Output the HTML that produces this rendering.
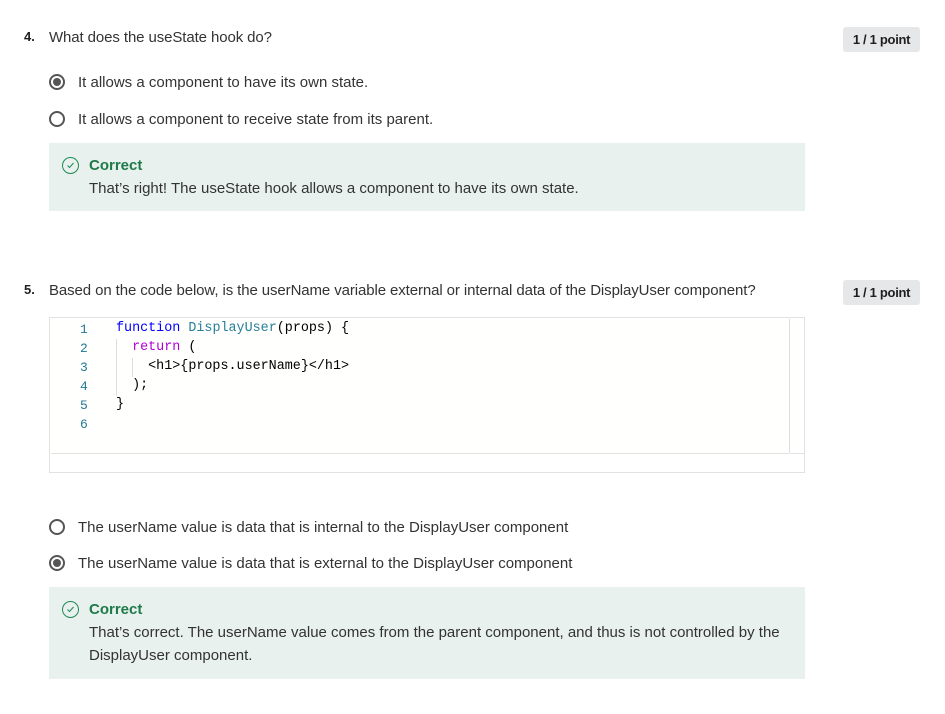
<!DOCTYPE html>
<html><head><style>
body{margin:0;width:945px;height:714px;background:#fff;font-family:"Liberation Sans",sans-serif;color:#1f1f1f;position:relative;overflow:hidden}
.a{position:absolute;white-space:nowrap}
.q{font-size:15px;color:#333}
.num{font-size:13px;font-weight:bold;color:#1f1f1f}
.pt{position:absolute;left:843px;width:77px;height:25px;background:#e5e7e8;border-radius:3px;font-size:13px;font-weight:bold;color:#1f1f1f;text-align:center;line-height:25px;letter-spacing:-0.3px}
.rad{position:absolute;left:49px;width:16px;height:16px;border:2px solid #555;border-radius:50%;box-sizing:border-box}
.rad.on::after{content:"";position:absolute;left:2px;top:2px;width:8px;height:8px;border-radius:50%;background:#555}
.fb{position:absolute;left:49px;width:756px;background:#e8f1ee}
.ck{position:absolute;left:13px;width:17px;height:17px;border:1px solid #1e8a53;border-radius:50%;box-sizing:border-box}
.cor{position:absolute;left:40px;font-size:15px;font-weight:bold;color:#1e7a48}
.ft{position:absolute;left:40px;font-size:15px;color:#333;line-height:23px}
.code{position:absolute;left:49px;top:317px;width:756px;height:156px;border:1px solid #e2e2e2;box-sizing:border-box;background:#fff}
.ln{position:absolute;left:30px;font-family:"Liberation Mono","DejaVu Sans Mono",monospace;font-size:13px;color:#237893}
.cl{position:absolute;left:66px;font-family:"Liberation Mono","DejaVu Sans Mono",monospace;font-size:13.4px;color:#000;white-space:pre}
</style></head><body>
<div class="a num" style="left:24px;top:29px">4.</div>
<div class="a q" style="left:49px;top:29px;letter-spacing:-0.1px">What does the useState hook do?</div>
<div class="pt" style="top:27px">1 / 1 point</div>
<div class="rad on" style="top:74px"></div>
<div class="a q" style="left:78px;top:74px">It allows a component to have its own state.</div>
<div class="rad" style="top:111px"></div>
<div class="a q" style="left:78px;top:111px">It allows a component to receive state from its parent.</div>
<div class="fb" style="top:143px;height:68px">
<div class="ck" style="top:14px"><svg width="15" height="15" viewBox="0 0 15 15"><path d="M4.5 7.5l2 2 4-4.5" fill="none" stroke="#1e8a53" stroke-width="1"/></svg></div>
<div class="a cor" style="top:14px">Correct</div>
<div class="a ft" style="top:34px">That’s right! The useState hook allows a component to have its own state.</div>
</div>

<div class="a num" style="left:24px;top:282px">5.</div>
<div class="a q" style="left:49px;top:282px;letter-spacing:-0.1px">Based on the code below, is the userName variable external or internal data of the DisplayUser component?</div>
<div class="pt" style="top:280px">1 / 1 point</div>
<div class="code">
<div style="position:absolute;left:1px;top:1px;width:738px;height:134px;background:#fffffe;border-bottom:1px solid #e2e2e2"></div>
<div style="position:absolute;left:739px;top:1px;width:1px;height:134px;background:#ddd"></div>
<div style="position:absolute;left:740px;top:135px;width:15px;height:1px;background:#e2e2e2"></div>
<div class="ln" style="top:4px">1</div><div class="cl" style="top:3px"><span style="color:#0000ff">function</span> <span style="color:#267f99">DisplayUser</span>(props) {</div>
<div class="ln" style="top:23px">2</div><div class="cl" style="top:22px">  <span style="color:#af00db">return</span> (</div>
<div class="ln" style="top:42px">3</div><div class="cl" style="top:41px">    &lt;h1&gt;{props.userName}&lt;/h1&gt;</div>
<div class="ln" style="top:61px">4</div><div class="cl" style="top:60px">  );</div>
<div class="ln" style="top:80px">5</div><div class="cl" style="top:79px">}</div>
<div class="ln" style="top:99px">6</div>
<div style="position:absolute;left:66px;top:21px;width:1px;height:57px;background:#ddd"></div>
<div style="position:absolute;left:82px;top:40px;width:1px;height:19px;background:#ddd"></div>
</div>

<div class="rad" style="top:519px"></div>
<div class="a q" style="left:78px;top:519px">The userName value is data that is internal to the DisplayUser component</div>
<div class="rad on" style="top:555px"></div>
<div class="a q" style="left:78px;top:555px">The userName value is data that is external to the DisplayUser component</div>
<div class="fb" style="top:587px;height:92px">
<div class="ck" style="top:14px"><svg width="15" height="15" viewBox="0 0 15 15"><path d="M4.5 7.5l2 2 4-4.5" fill="none" stroke="#1e8a53" stroke-width="1"/></svg></div>
<div class="a cor" style="top:14px">Correct</div>
<div class="ft" style="top:34px;width:700px">That’s correct. The userName value comes from the parent component, and thus is not controlled by the DisplayUser component.</div>
</div>
</body></html>
